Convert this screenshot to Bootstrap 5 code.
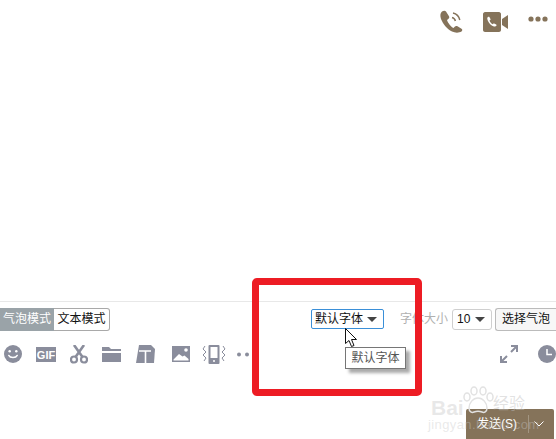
<!DOCTYPE html>
<html>
  <head>
    <title>Chat</title>
    <link href="https://cdn.jsdelivr.net/npm/bootstrap@5.3.3/dist/css/bootstrap.min.css" rel="stylesheet" />
    <script src="https://cdn.jsdelivr.net/npm/bootstrap@5.3.3/dist/js/bootstrap.bundle.min.js"></script>
    <style>
      html, body { height: 439px; overflow: hidden; background: #fff; }
      body { font-family: "Liberation Sans", "Noto Sans CJK SC", sans-serif; font-size: 12px; color: #222; position: relative; }
      .chat-shell { width: 556px; height: 439px; }
      .call-bar { height: 44px; padding: 10px 8px 0 0; gap: 20px; }
      .cam-icon { margin-top: 2px; }
      .more-icon { margin-top: 6px; }
      .msg-area { height: 258px; border-bottom: 1px solid #e8e8e8; }
      .tool-row { height: 37px; padding-top: 6px; }
      .mode-on { width: 54px; height: 23px; background: #9aa3a8; color: #fff; line-height: 23px; text-align: center; }
      .mode-off { width: 56px; height: 23px; border: 1px solid #a9a9a9; border-left: 0; border-radius: 0 3px 3px 0; line-height: 21px; text-align: center; color: #111; }
      .font-pick { width: 73px; height: 20px; margin-left: 201px; margin-top: 1px; border: 1px solid #3a8fd8; border-radius: 2px; padding: 0 6px 0 3px; line-height: 18px; color: #111; }
      .size-label { width: 52px; margin-left: 16px; color: #b0b0b0; line-height: 23px; }
      .size-pick { width: 40px; height: 21px; border: 1px solid #cfcfcf; border-radius: 3px; padding: 0 6px 0 4px; line-height: 19px; margin-top: 1px; margin-right: 3px; color: #111; }
      .bubble-btn { width: 61px; height: 23px; border: 1px solid #bbb; border-right: 0; border-radius: 3px 0 0 3px; background: #f7f7f7; line-height: 21px; text-align: center; flex: none; color: #111; }
      .arrow-down { width: 0; height: 0; border-left: 5px solid transparent; border-right: 5px solid transparent; border-top: 5px solid #444; }
      .icon-row { height: 30px; padding-left: 4px; gap: 14px; }
      .icon-row svg { flex: none; }
      .icon-skin { margin-left: 1px; margin-right: 3px; }
      .icon-tight { margin-left: -2px; }
      .icon-dots { margin-left: -4px; }
      .icon-clock { margin-left: 6px; }
      .send-row { height: 70px; padding: 40px 2px 0 0; }
      .send-btn { width: 88px; height: 30px; background: #85735a; color: #fff; border-radius: 2px 2px 0 0; font-size: 12px; }
      .send-label { width: 62px; text-align: center; }
      .send-drop { height: 18px; border-left: 1px solid #a39682; padding-left: 5px; }
      .red-frame { position: absolute; left: 252px; top: 278px; width: 170px; height: 118px; border: 7px solid #ed1c24; border-radius: 5px; pointer-events: none; }
      .tip-box { position: absolute; left: 345px; top: 347px; width: 61px; height: 22px; background: #fff; border: 1px solid #767676; box-shadow: 4px 4px 3px #aaa; color: #555; line-height: 20px; text-align: center; }
      .mouse-arrow { position: absolute; left: 345px; top: 328px; }
      .wm-paw { position: absolute; left: 462px; top: 386px; }
      .wm-text { position: absolute; left: 431px; top: 396px; color: rgba(190,190,190,.35); font-size: 21px; line-height: 24px; font-weight: 700; }
      .wm-sub { position: absolute; left: 428px; top: 417px; color: rgba(200,200,200,.4); font-size: 13px; line-height: 16px; letter-spacing: .4px; }
      .wm-cn { position: absolute; left: 493px; top: 394px; color: rgba(190,190,190,.45); font-size: 16px; line-height: 20px; }
    </style>
  </head>
  <body>
    <div class="chat-shell d-flex flex-column">
      <div class="call-bar d-flex justify-content-end align-items-start">
        <svg width="23" height="23" viewBox="0 0 23 23">
          <path fill="#85735a" d="M2 1.500C0 3 0 6 1 9c2 5 6 10 11 12.500 3 1.500 7 1.500 9.500 0 1-.7 1-2 0-2.700l-4-2.500c-1-.6-2-.5-2.800.4l-1.200 1.300c-2.500-1-5.500-5-6.500-8l1.500-1.200c.8-.7 1-1.600.5-2.600L6 1.500C5.300.3 3.300.5 2 1.500z"/>
          <path fill="none" stroke="#85735a" stroke-width="1.500" d="M12 7.500c1.700.4 3 1.800 3.400 3.500M13 3c3.500 .8 6 3.500 6.800 7"/>
        </svg>
        <svg width="25" height="20" viewBox="0 0 25 20" class="cam-icon">
          <path fill="#85735a" d="M2 0h14c1 0 2 1 2 2v16c0 1-1 2-2 2H2c-1 0-2-1-2-2V2c0-1 1-2 2-2zM19 7l6-4v14l-6-4z"/>
          <path fill="#fff" d="M5 5c-1 .5-1 2 0 4 1 2.500 3.500 5 6 5.500 1 .2 2-.3 2.500-1 .2-.5 0-.8-.3-1l-2-1c-.5-.2-.8 0-1 .3l-.5.5C8.500 12 7 10 6.500 8.500L7.300 8c.3-.3.3-.7.200-1L6.500 5.200C6.200 4.700 5.500 4.700 5 5z"/>
        </svg>
        <svg width="20" height="6" viewBox="0 0 20 6" class="more-icon">
          <circle cx="3" cy="3" r="2.600" fill="#85735a"/><circle cx="10" cy="3" r="2.600" fill="#85735a"/><circle cx="17" cy="3" r="2.600" fill="#85735a"/>
        </svg>
      </div>
      <div class="msg-area"></div>
      <div class="tool-row d-flex align-items-start">
        <div class="mode-on">气泡模式</div>
        <div class="mode-off">文本模式</div>
        <div class="font-pick d-flex justify-content-between align-items-center"><span>默认字体</span><span class="arrow-down"></span></div>
        <div class="size-label">字体大小</div>
        <div class="size-pick d-flex justify-content-between align-items-center"><span>10</span><span class="arrow-down"></span></div>
        <div class="bubble-btn">选择气泡</div>
      </div>
      <div class="icon-row d-flex align-items-center">
        <svg width="18" height="18" viewBox="0 0 19 19">
          <circle cx="9.500" cy="9.500" r="9.500" fill="#8a8d9c"/>
          <path fill="none" stroke="#fff" stroke-width="1.500" stroke-linecap="round" d="M5 11c1.500 3 7.500 3 9 0"/>
          <circle cx="6" cy="6.500" r="1.300" fill="#fff"/><circle cx="13" cy="6.500" r="1.300" fill="#fff"/>
        </svg>
        <svg width="20" height="15" viewBox="0 0 20 15">
          <rect width="20" height="15" fill="#8a8d9c"/>
          <text x="10" y="12" text-anchor="middle" fill="#fff" font-size="11" font-weight="700" font-family="Liberation Sans">GIF</text>
        </svg>
        <svg width="18" height="19" viewBox="0 0 18 19">
          <g fill="none" stroke="#8a8d9c">
            <circle cx="4" cy="14.500" r="3" stroke-width="2.200"/><circle cx="14" cy="14.500" r="3" stroke-width="2.200"/>
            <path stroke-width="2.600" d="M5.500 12L14 0M12.500 12L4 0"/>
          </g>
        </svg>
        <svg width="19" height="15" viewBox="0 0 19 15">
          <path fill="#8a8d9c" d="M0 0h7l2 2h10v2H0zM0 6h19v9H0z"/>
        </svg>
        <svg width="19" height="18" viewBox="0 0 19 18" class="icon-skin">
          <path fill="#8a8d9c" d="M3 0h12l4 4-1 14H0z"/>
          <path fill="none" stroke="#fff" stroke-width="1.600" d="M3 6h12M9.500 6v12"/>
        </svg>
        <svg width="18" height="16" viewBox="0 0 18 16">
          <path fill="#8a8d9c" d="M0 0h18v16H0z"/>
          <path fill="#fff" d="M1.500 13.500L7 8l3.500 2.500 2-1 4 3.500v1.500h-15z"/><circle cx="14" cy="4" r="1.800" fill="#fff"/>
        </svg>
        <svg width="24" height="19" viewBox="0 0 24 19" class="icon-tight">
          <rect x="6.500" y="0" width="11" height="19" rx="1" fill="#8a8d9c"/>
          <rect x="8.500" y="2" width="7" height="11" fill="#fff"/><circle cx="12" cy="16" r="1" fill="#fff"/>
          <path fill="none" stroke="#8a8d9c" d="M3 1L1 4l3 3-3 3 3 3-2 3M21 1l2 3-3 3 3 3-3 3 2 3"/>
        </svg>
        <svg width="14" height="5" viewBox="0 0 14 5" class="icon-dots">
          <circle cx="3" cy="2.500" r="2" fill="#8a8d9c"/><circle cx="11" cy="2.500" r="2" fill="#8a8d9c"/>
        </svg>
        <svg width="18" height="18" viewBox="0 0 18 18" class="ms-auto">
          <path fill="none" stroke="#8a8d9c" stroke-width="2" d="M2 16l5-5M11 7l5-5M11 1h6v6M1 11v6h6"/>
        </svg>
        <svg width="18" height="18" viewBox="0 0 18 18" class="icon-clock">
          <circle cx="9" cy="9" r="9" fill="#8a8d9c"/>
          <path fill="none" stroke="#fff" stroke-width="1.500" d="M9 4v5.500h5"/>
        </svg>
      </div>
      <div class="send-row d-flex justify-content-end">
        <div class="send-btn d-flex align-items-center">
          <span class="send-label">发送(S)</span>
          <span class="send-drop d-flex align-items-center">
            <svg width="10" height="6" viewBox="0 0 10 6"><path fill="none" stroke="#fff" d="M.5.5L5 5 9.500.5"/></svg>
          </span>
        </div>
      </div>
    </div>

    <svg class="wm-paw" width="32" height="30" viewBox="0 0 32 30">
      <g fill="none" stroke="#e2e2e2" stroke-width="1.500">
        <ellipse cx="5" cy="11" rx="3" ry="4"/><ellipse cx="12" cy="5" rx="3" ry="4"/><ellipse cx="21" cy="5" rx="3" ry="4"/><ellipse cx="28" cy="11" rx="3" ry="4"/>
        <path d="M16 12c-5 0-9 5-9 10 0 4 3 5 5 4 3-1 5-1 8 0 2 1 5 0 5-4 0-5-4-10-9-10z"/>
      </g>
    </svg>
    <div class="wm-text">Bai</div>
    <div class="wm-cn">经验</div>
    <div class="wm-sub">jingyan.baidu.com</div>

    <div class="red-frame"></div>
    <svg class="mouse-arrow" width="14" height="20" viewBox="0 0 14 20">
      <path fill="#fff" stroke="#111" d="M.5.5v15l3.500-3 2.500 6 2.500-1-2.500-6h5z"/>
    </svg>
    <div class="tip-box">默认字体</div>
  </body>
</html>
